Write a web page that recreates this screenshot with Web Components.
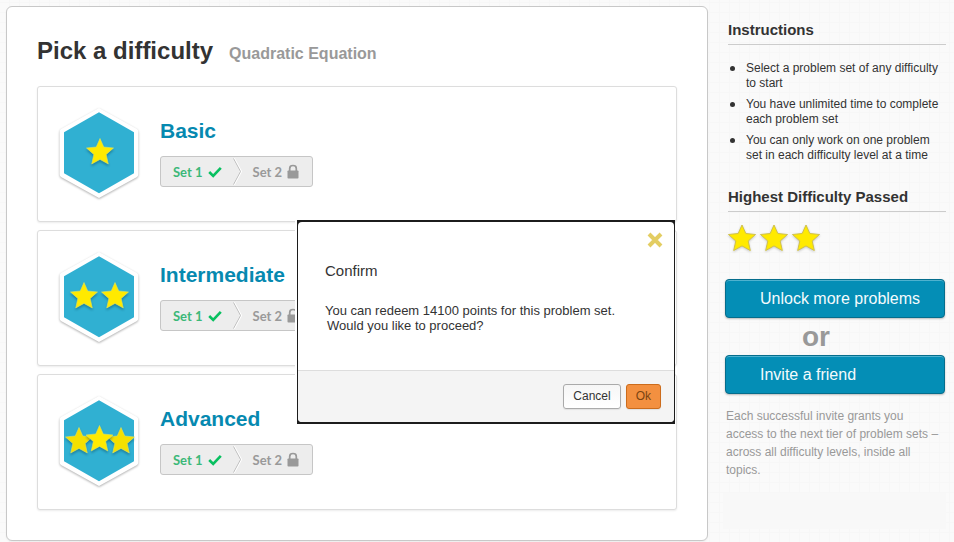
<!DOCTYPE html>
<html lang="en">
<head>
<meta charset="utf-8">
<title>Pick a difficulty</title>
<style>
body {
  margin: 0;
  font: 12px/15px "Liberation Sans", Arial, sans-serif;
  color: #333;
  background-color: #fafafa;
  background-image:
    repeating-linear-gradient(90deg, transparent 0 9px, #f7f7f7 9px 10px),
    repeating-linear-gradient(0deg, transparent 0 9px, #f7f7f7 9px 10px);
}
</style>
</head>
<body>
<problem-page>
  <difficulty-panel slot="main" heading="Pick a difficulty" topic="Quadratic Equation">
    <difficulty-card name="Basic" stars="1"></difficulty-card>
    <difficulty-card name="Intermediate" stars="2"></difficulty-card>
    <difficulty-card name="Advanced" stars="3"></difficulty-card>
    <confirm-dialog slot="overlay" heading="Confirm">
      <div>You can redeem 14100 points for this problem set.</div>
      <div class="question">Would you like to proceed?</div>
    </confirm-dialog>
  </difficulty-panel>
  <side-section slot="side" heading="Instructions">
    <instruction-list></instruction-list>
  </side-section>
  <side-section slot="side" heading="Highest Difficulty Passed">
    <star-rating></star-rating>
  </side-section>
  <invite-box slot="side"></invite-box>
</problem-page>

<script>
const STAR = '14,0.5 17.8,9 27.5,10 20.2,16.5 22.3,26 14,21.4 5.7,26 7.8,16.5 0.5,10 10.2,9';

function define(name, render) {
  customElements.define(name, class extends HTMLElement {
    connectedCallback() {
      if (!this.shadowRoot) this.attachShadow({ mode: 'open' }).innerHTML = render(this);
    }
  });
}

define('problem-page', () => `
  <style>
    :host { display: grid; grid-template-columns: minmax(0, 1fr) 221px; gap: 17px; padding: 6px 8px 1px 6px; align-items: start; }
    aside { padding-top: 16px; }
  </style>
  <main><slot name="main"></slot></main>
  <aside><slot name="side"></slot></aside>`);

define('difficulty-panel', el => `
  <style>
    :host { display: block; position: relative; padding: 30px; background: #fff; border: 1px solid #c8c8c8; border-radius: 6px; box-shadow: 0 1px 2px rgba(0,0,0,.06); }
    header { display: flex; align-items: baseline; gap: 16px; padding-bottom: 18px; line-height: 28px; }
    h1 { margin: 0; font-size: 24px; color: #333; }
    p { margin: 0; font-size: 16px; font-weight: bold; color: #999; }
    .cards { display: grid; gap: 8px; }
  </style>
  <header><h1>${el.getAttribute('heading')}</h1><p>${el.getAttribute('topic')}</p></header>
  <div class="cards"><slot></slot></div>
  <slot name="overlay"></slot>`);

define('difficulty-card', el => `
  <style>
    :host { display: flex; gap: 20px; padding: 19px 20px 21px; border: 1px solid #ddd; border-radius: 3px; background: #fff; box-shadow: 0 1px 2px rgba(0,0,0,.08); }
    .text { display: flex; flex-direction: column; align-items: flex-start; gap: 13px; padding-top: 12px; }
    h2 { margin: 0; font-size: 21px; line-height: 25px; color: #0689b0; }
  </style>
  <level-badge stars="${el.getAttribute('stars')}"></level-badge>
  <div class="text"><h2>${el.getAttribute('name')}</h2><set-steps></set-steps></div>`);

define('level-badge', el => {
  const star = (x, y, fill) => `<polygon class="star" points="${STAR}" transform="translate(${x} ${y})" fill="${fill}"/>`;
  const sets = {
    1: star(28, 32, '#ffea00'),
    2: star(12, 32, '#ffea00') + star(43, 32, '#ffea00'),
    3: star(7, 33, '#f4e000') + star(49, 33, '#f4e000') + star(27.5, 31, '#ffea00')
  };
  return `
  <style>
    :host { display: block; height: 94px; }
    svg { display: block; overflow: visible; }
    .rim { fill: #fff; filter: drop-shadow(0 1px 1px rgba(0,0,0,.32)); }
    .star { stroke: #d9e26a; stroke-width: .6; filter: drop-shadow(0 2px 1px rgba(0,50,70,.35)); }
  </style>
  <svg width="82" height="94" viewBox="0 0 82 94" role="img" aria-label="${el.getAttribute('stars')} star level">
    <path class="rim" d="M41 2 79 23Q80.300 24 80.300 26V68Q80.300 70 79 71L41 92 3 71Q1.700 70 1.700 68V26Q1.700 24 3 23Z"/>
    <polygon points="41,6.300 76,26.300 76,67.300 41,87.300 6,67.300 6,26.300" fill="#30b0d2"/>
    ${sets[el.getAttribute('stars')]}
  </svg>`;
});

define('set-steps', () => `
  <style>
    :host { display: flex; align-items: center; box-sizing: border-box; height: 31px; padding: 0 13px 0 12px; border: 1px solid #c6c6c6; border-radius: 3px; background: #ededed; font: bold 13px/18px Lato, sans-serif; color: #999; }
    svg { display: block; flex: none; }
    .step { display: flex; align-items: center; gap: 5px; }
    .done { color: #3cb878; }
    .arrow { margin: 0 11px; }
  </style>
  <span class="step done">Set 1
    <svg width="14" height="12" viewBox="0 0 14 12"><path d="M1.200 6 5.200 10 12.800 1.800" fill="none" stroke="#08c060" stroke-width="2.600"/></svg>
  </span>
  <svg class="arrow" width="9" height="27" viewBox="0 0 9 27"><path d="M1 .5 8 13.500 1 26.500" fill="none" stroke="#fff" stroke-width="2"/><path d="M.5 .5 7.500 13.500 .5 26.500" fill="none" stroke="#bbb" stroke-width="1"/></svg>
  <span class="step">Set 2
    <svg width="12" height="15" viewBox="0 0 12 15"><rect x=".5" y="6.500" width="11" height="8" rx=".8" fill="#999"/><path d="M2.700 7V4.500Q2.700 1.500 6 1.500T9.300 4.500V7" fill="none" stroke="#999" stroke-width="1.700"/></svg>
  </span>`);

define('confirm-dialog', el => `
  <style>
    :host { position: absolute; top: 213px; right: 32px; width: 378px; box-sizing: border-box; padding: 2px 1px; background: #1c1c1c; box-shadow: -2px 0 0 #fff; font-size: 13px; }
    section { border-radius: 4px; overflow: hidden; background: #fff; }
    .body { position: relative; padding: 40px 27px 37px; }
    h2 { margin: 0 0 23px; font-size: 15px; line-height: 18px; font-weight: normal; }
    ::slotted(.question) { padding-left: 2px; }
    .close { position: absolute; top: 8px; right: 9px; padding: 2px; border: 0; background: none; }
    .close svg { display: block; }
    footer { display: flex; justify-content: flex-end; gap: 5px; padding: 13px; background: #f4f4f4; border-top: 1px solid #ddd; }
    footer button { height: 25px; padding: 0 9px; border: 1px solid #aaa; border-radius: 3px; font: 12px/15px "Liberation Sans", Arial, sans-serif; color: #333; background: linear-gradient(#f6f6f6, #fff); box-shadow: 0 1px 1px rgba(0,0,0,.08); }
    footer .ok { border-color: #cc6c1c; color: #7a4412; background: #f39040; }
  </style>
  <section role="dialog" aria-labelledby="t">
    <div class="body">
      <button class="close" aria-label="Close"><svg width="16" height="16" viewBox="0 0 16 16"><path d="M2 2 14 14M14 2 2 14" stroke="#e3cd62" stroke-width="4"/></svg></button>
      <h2 id="t">${el.getAttribute('heading')}</h2>
      <slot></slot>
    </div>
    <footer><button>Cancel</button><button class="ok">Ok</button></footer>
  </section>`);

define('side-section', el => `
  <style>
    :host { display: block; padding-left: 3px; }
    h3 { margin: 0; padding-bottom: 6px; border-bottom: 1px solid #ccc; font-size: 15px; line-height: 16px; color: #333; }
  </style>
  <h3>${el.getAttribute('heading')}</h3>
  <slot></slot>`);

define('instruction-list', () => `
  <style>
    :host { display: block; padding: 16px 0 26px; }
    ul { display: grid; gap: 6px; margin: 0; padding: 0; list-style: none; }
    li { display: flex; gap: 11px; }
    li::before { content: ""; flex: none; width: 5px; height: 5px; margin: 5px 0 0 2px; border-radius: 50%; background: #333; }
  </style>
  <ul>
    <li>Select a problem set of any difficulty to start</li>
    <li>You have unlimited time to complete each problem set</li>
    <li>You can only work on one problem set in each difficulty level at a time</li>
  </ul>`);

define('star-rating', () => `
  <style>
    :host { display: flex; gap: 4px; padding: 12px 0 27px; }
    svg { display: block; overflow: visible; filter: drop-shadow(0 1px 1px rgba(0,0,0,.2)); }
  </style>
  ${`<svg width="28" height="28" viewBox="0 0 28 27"><polygon points="${STAR}" fill="#ffea00" stroke="#cfc04a" stroke-width="1"/></svg>`.repeat(3)}`);

define('invite-box', () => `
  <style>
    :host { display: block; }
    button { display: block; width: calc(100% - 1px); height: 39px; padding: 0 34px; text-align: left; white-space: nowrap; border: 1px solid #056d8c; border-radius: 4px; background: #048eb6; box-shadow: inset 0 1px 0 #4fb2cf, 0 1px 2px rgba(0,0,0,.25); color: #f4fbfd; font: 16px/20px "Liberation Sans", Arial, sans-serif; }
    .or { margin: 0; padding-right: 39px; text-align: center; font-size: 28px; line-height: 37px; font-weight: bold; color: #999; }
    .note { margin: 13px 0 0; padding: 0 4px 0 1px; line-height: 18px; color: #999; }
    .blank { height: 36px; margin: 14px 0 0 -2px; background: #f8f8f8; }
  </style>
  <button>Unlock more problems</button>
  <p class="or">or</p>
  <button>Invite a friend</button>
  <p class="note">Each successful invite grants you access to the next tier of problem sets – across all difficulty levels, inside all topics.</p>
  <div class="blank"></div>`);
</script>
</body>
</html>
